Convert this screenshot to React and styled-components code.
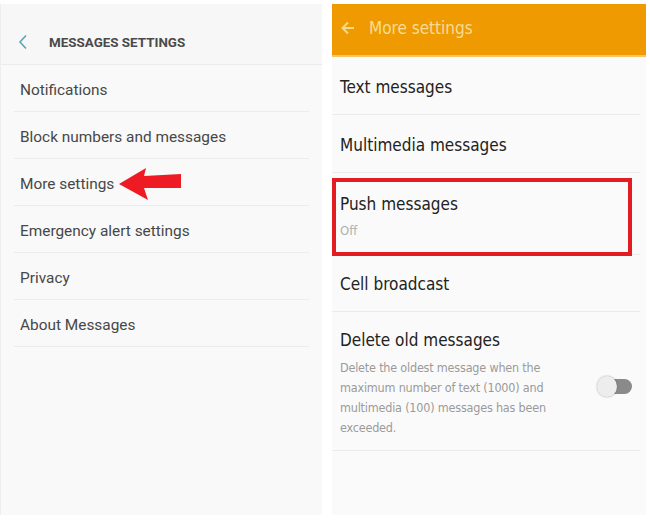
import React from "react";
import styled, { createGlobalStyle } from "styled-components";

const GlobalStyle = createGlobalStyle`
  body {
    margin: 0;
    background: #ffffff;
  }
`;

const leftItems = [
  "Notifications",
  "Block numbers and messages",
  "More settings",
  "Emergency alert settings",
  "Privacy",
  "About Messages",
];

const App = () => {
  return (
    <>
      <GlobalStyle />
      <Page>
        <LeftPanel>
          <LeftHeader>
            <svg width="10" height="16" viewBox="0 0 10 16">
              <path d="M8 1.5 L2 8 L8 14.5" fill="none" stroke="#5aa6b8" strokeWidth="1.6" />
            </svg>
            <LeftTitle>MESSAGES SETTINGS</LeftTitle>
          </LeftHeader>
          <LeftList>
            {leftItems.map((item) => (
              <LeftRow key={item}>
                <LeftLabel>{item}</LeftLabel>
                {item === "More settings" && (
                  <Arrow width="64" height="32" viewBox="0 0 64 32">
                    <polygon points="0,16 27,0 25,8 62,6 62,20 25,20 29,32" fill="#ee1b24" />
                  </Arrow>
                )}
              </LeftRow>
            ))}
          </LeftList>
        </LeftPanel>

        <RightPanel>
          <RightHeader>
            <svg width="14" height="14" viewBox="0 0 14 14">
              <path d="M13 7 H2 M7 1.5 L1.5 7 L7 12.5" fill="none" stroke="#f6d98c" strokeWidth="2" />
            </svg>
            <RightTitle>More settings</RightTitle>
          </RightHeader>
          <RightList>
            <RightRow $h={58}>
              <ItemTitle>Text messages</ItemTitle>
            </RightRow>
            <RightRow $h={58}>
              <ItemTitle>Multimedia messages</ItemTitle>
            </RightRow>
            <RightRow $h={82} $boxed>
              <Highlight>
                <ItemTitle>Push messages</ItemTitle>
                <ItemSub>Off</ItemSub>
              </Highlight>
            </RightRow>
            <RightRow $h={57}>
              <ItemTitle>Cell broadcast</ItemTitle>
            </RightRow>
            <DeleteRow>
              <DeleteText>
                <ItemTitle>Delete old messages</ItemTitle>
                <Description>
                  Delete the oldest message when the
                  <br />
                  maximum number of text (1000) and
                  <br />
                  multimedia (100) messages has been
                  <br />
                  exceeded.
                </Description>
              </DeleteText>
              <Toggle>
                <Knob />
              </Toggle>
            </DeleteRow>
          </RightList>
        </RightPanel>
      </Page>
    </>
  );
};

const Page = styled.div`
  display: flex;
  gap: 10px;
  padding-top: 4px;
  height: 511px;
`;

const LeftPanel = styled.div`
  width: 322px;
  display: flex;
  flex-direction: column;
  background: #f9f9f9;
  border-left: 1px solid #eeeeee;
  box-sizing: border-box;
  font-family: Roboto, "Liberation Sans", sans-serif;
`;

const LeftHeader = styled.div`
  height: 61px;
  display: flex;
  align-items: center;
  padding: 16px 0 0 17px;
  gap: 21px;
  background: #f7f7f7;
  border-bottom: 1px solid #ebebeb;
  box-sizing: border-box;
`;

const LeftTitle = styled.div`
  font-size: 13.4px;
  font-weight: 700;
  color: #4a4a4a;
`;

const LeftList = styled.div`
  display: flex;
  flex-direction: column;
  padding: 0 13px;
`;

const LeftRow = styled.div`
  height: 47px;
  display: flex;
  align-items: center;
  padding: 4px 6px 0;
  border-bottom: 1px solid #ececec;
  box-sizing: border-box;
  gap: 5px;
`;

const LeftLabel = styled.div`
  font-size: 15.4px;
  color: #474747;
`;

const Arrow = styled.svg`
  display: block;
`;

const RightPanel = styled.div`
  width: 314px;
  display: flex;
  flex-direction: column;
  background: #fafafa;
  font-family: "DejaVu Sans Condensed", "DejaVu Sans", sans-serif;
`;

const RightHeader = styled.div`
  height: 53px;
  display: flex;
  align-items: center;
  gap: 14px;
  padding: 0 0 4px 9px;
  box-sizing: border-box;
  background: #ef9a00;
  border-bottom: 2px solid #f6c46a;
`;

const RightTitle = styled.div`
  font-size: 17px;
  color: #f6dc98;
`;

const RightList = styled.div`
  display: flex;
  flex-direction: column;
  padding-right: 6px;
`;

const RightRow = styled.div`
  height: ${(p) => p.$h}px;
  display: flex;
  flex-direction: column;
  justify-content: ${(p) => (p.$boxed ? "flex-end" : "center")};
  padding-left: ${(p) => (p.$boxed ? 0 : 8)}px;
  padding-top: ${(p) => (p.$boxed ? 0 : 2)}px;
  border-bottom: 1px solid #ebebeb;
  box-sizing: border-box;
`;

const Highlight = styled.div`
  height: 78px;
  margin-right: 8px;
  border: 4px solid #e31b23;
  box-sizing: border-box;
  padding: 12px 0 0 4px;
  margin-bottom: -2px;
`;

const ItemTitle = styled.div`
  font-size: 17px;
  color: #222222;
`;

const ItemSub = styled.div`
  font-size: 13px;
  color: #b0b0b0;
  margin-top: 9px;
`;

const DeleteRow = styled.div`
  height: 139px;
  display: flex;
  align-items: flex-start;
  justify-content: space-between;
  padding: 18px 8px 0 8px;
  border-bottom: 1px solid #ebebeb;
  box-sizing: border-box;
`;

const DeleteText = styled.div`
  display: flex;
  flex-direction: column;
`;

const Description = styled.div`
  margin-top: 8px;
  font-size: 12.5px;
  line-height: 20px;
  color: #9a9a9a;
  letter-spacing: -0.2px;
`;

const Toggle = styled.div`
  position: relative;
  margin: 49px 0 0 0;
  width: 32px;
  height: 15px;
  border-radius: 8px;
  background: #8a8a8a;
`;

const Knob = styled.div`
  position: absolute;
  left: -3px;
  top: -3px;
  width: 20px;
  height: 21px;
  border-radius: 50%;
  background: #ededed;
  box-shadow: 0 0 2px rgba(0, 0, 0, 0.35);
`;

export default App;
